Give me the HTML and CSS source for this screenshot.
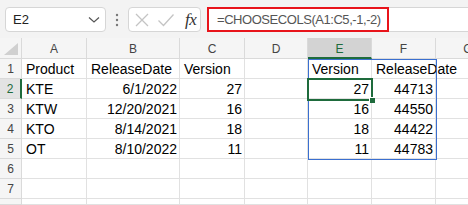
FILE: index.html
```html
<!DOCTYPE html>
<html>
<head>
<meta charset="utf-8">
<link rel="stylesheet" href="styles.css">
</head>
<body>
<div class="toolbar">
  <div class="namebox">
    <span class="nb-text">E2</span>
    <svg class="chev" width="12" height="8" viewBox="0 0 12 8"><path d="M1 1.5 L6 6 L11 1.5" fill="none" stroke="#555" stroke-width="1.2"/></svg>
  </div>
  <div class="dots">
    <svg width="4" height="14" viewBox="0 0 4 14"><circle cx="2" cy="2" r="1.2" fill="#777"/><circle cx="2" cy="7" r="1.2" fill="#777"/><circle cx="2" cy="12" r="1.2" fill="#777"/></svg>
  </div>
  <div class="fxbox">
    <svg class="ico-x" width="16" height="16" viewBox="0 0 16 16"><path d="M2 2 L14 14 M14 2 L2 14" stroke="#c4c4c4" stroke-width="1.3" fill="none"/></svg>
    <svg class="ico-check" width="18" height="14" viewBox="0 0 18 14"><path d="M1.5 7.5 L6.5 12.5 L16.5 1.5" stroke="#c4c4c4" stroke-width="1.3" fill="none"/></svg>
    <span class="fx">fx</span>
  </div>
  <div class="formula">
    <div class="formula-hl">=CHOOSECOLS(A1:C5,-1,-2)</div>
  </div>
</div>
<div class="sheet">
  <div class="grid">
    <div class="hd corner"><svg width="14" height="12" viewBox="0 0 14 12"><path d="M14 0 L14 12 L0 12 Z" fill="#d0d0d0"/></svg></div>
    <div class="hd col">A</div>
    <div class="hd col">B</div>
    <div class="hd col">C</div>
    <div class="hd col">D</div>
    <div class="hd col sel">E</div>
    <div class="hd col">F</div>
    <div class="hd col">G</div>

    <div class="hd row">1</div>
    <div class="c">Product</div>
    <div class="c">ReleaseDate</div>
    <div class="c">Version</div>
    <div class="c"></div>
    <div class="c">Version</div>
    <div class="c">ReleaseDate</div>
    <div class="c"></div>

    <div class="hd row rsel">2</div>
    <div class="c">KTE</div>
    <div class="c r">6/1/2022</div>
    <div class="c r">27</div>
    <div class="c"></div>
    <div class="c r">27</div>
    <div class="c r">44713</div>
    <div class="c"></div>

    <div class="hd row">3</div>
    <div class="c">KTW</div>
    <div class="c r">12/20/2021</div>
    <div class="c r">16</div>
    <div class="c"></div>
    <div class="c r">16</div>
    <div class="c r">44550</div>
    <div class="c"></div>

    <div class="hd row">4</div>
    <div class="c">KTO</div>
    <div class="c r">8/14/2021</div>
    <div class="c r">18</div>
    <div class="c"></div>
    <div class="c r">18</div>
    <div class="c r">44422</div>
    <div class="c"></div>

    <div class="hd row">5</div>
    <div class="c">OT</div>
    <div class="c r">8/10/2022</div>
    <div class="c r">11</div>
    <div class="c"></div>
    <div class="c r">11</div>
    <div class="c r">44783</div>
    <div class="c"></div>

    <div class="hd row">6</div>
    <div class="c"></div><div class="c"></div><div class="c"></div><div class="c"></div><div class="c"></div><div class="c"></div><div class="c"></div>

    <div class="hd row">7</div>
    <div class="c"></div><div class="c"></div><div class="c"></div><div class="c"></div><div class="c"></div><div class="c"></div><div class="c"></div>

    <div class="hd row"></div>
    <div class="c"></div><div class="c"></div><div class="c"></div><div class="c"></div><div class="c"></div><div class="c"></div><div class="c"></div>
  </div>
  <div class="spill"></div>
  <div class="selection"><div class="handle"></div></div>
</div>
</body>
</html>
```

FILE: styles.css
```css
html, body {
  margin: 0;
  padding: 0;
}
body {
  width: 468px;
  height: 205px;
  overflow: hidden;
  background: #f3f3f3;
  font-family: "Liberation Sans", Arial, sans-serif;
}
.toolbar {
  height: 38px;
  box-sizing: border-box;
  padding-top: 7px;
  display: flex;
  align-items: flex-start;
}
.namebox {
  margin-left: 5px;
  width: 101px;
  height: 25px;
  box-sizing: border-box;
  background: #fff;
  border: 1px solid #d6d6d6;
  border-radius: 4px;
  display: flex;
  align-items: center;
  justify-content: space-between;
  padding: 0 5px 0 7px;
}
.nb-text {
  font-size: 13px;
  color: #222;
}
.chev {
  display: block;
}
.dots {
  width: 22px;
  height: 25px;
  display: flex;
  align-items: center;
  justify-content: center;
}
.dots svg { display: block; }
.fxbox {
  width: 73px;
  height: 25px;
  box-sizing: border-box;
  background: #fff;
  border: 1px solid #d6d6d6;
  border-radius: 4px;
  display: flex;
  align-items: center;
  padding-left: 5px;
}
.ico-x { display: block; margin-right: 7px; }
.ico-check { display: block; }
.fx {
  font-family: "Liberation Serif", "Times New Roman", serif;
  font-style: italic;
  font-size: 17px;
  color: #333;
  margin-left: 10px;
  letter-spacing: -0.5px;
}
.formula {
  flex: 1;
  margin-left: 6px;
  height: 25px;
  box-sizing: border-box;
  background: #fff;
  border-top: 1px solid #d6d6d6;
  border-bottom: 1px solid #d6d6d6;
  display: flex;
  align-items: stretch;
}
.formula-hl {
  width: 182px;
  box-sizing: border-box;
  border: 2px solid #e8141b;
  margin-top: -1px;
  margin-bottom: -1px;
  padding-left: 8px;
  font-size: 13px;
  letter-spacing: -0.45px;
  color: #555;
  display: flex;
  align-items: center;
}
.sheet {
  position: relative;
  background: #fff;
  width: 468px;
  overflow: hidden;
}
.grid {
  display: grid;
  grid-template-columns: 22px 65px 93px 65px 63px 64px 64px 65px;
  grid-template-rows: 21px repeat(7, 20px) 6px;
  width: 501px;
}
.hd {
  background: #f5f5f5;
  color: #444;
  font-size: 12px;
  box-sizing: border-box;
  border-right: 1px solid #dadada;
  border-bottom: 1px solid #dadada;
  display: flex;
  align-items: center;
  justify-content: center;
  padding-top: 2px;
}
.hd.corner {
  align-items: flex-end;
  justify-content: flex-end;
  padding: 0 3px 3px 0;
}
.hd.corner svg { display: block; }
.hd.col.sel {
  background: #d3d3d3;
  color: #1e6b3c;
  border-bottom: 2px solid #1e6b3c;
}
.hd.row {
  padding-top: 1px;
  background: #f5f5f5;
}
.hd.row.rsel {
  background: #e3e3e3;
  color: #1e6b3c;
  border-right: 2px solid #1e6b3c;
}
.c {
  box-sizing: border-box;
  border-right: 1px solid #e1e1e1;
  border-bottom: 1px solid #e1e1e1;
  font-size: 14px;
  line-height: 19px;
  padding: 1px 2px 0 4px;
  color: #000;
  white-space: nowrap;
  overflow: visible;
}
.c.r {
  text-align: right;
  padding-right: 2px;
}
.spill {
  position: absolute;
  left: 308px;
  top: 21px;
  width: 129px;
  height: 101px;
  box-sizing: border-box;
  border: 1px solid #3a6fd0;
}
.selection {
  position: absolute;
  left: 307px;
  top: 40px;
  width: 66px;
  height: 23px;
  box-sizing: border-box;
  border: 2px solid #1e6b3c;
}
.handle {
  position: absolute;
  right: -4px;
  bottom: -4px;
  width: 6px;
  height: 6px;
  box-sizing: border-box;
  background: #1e6b3c;
  border-left: 1px solid #fff;
  border-top: 1px solid #fff;
}
```
